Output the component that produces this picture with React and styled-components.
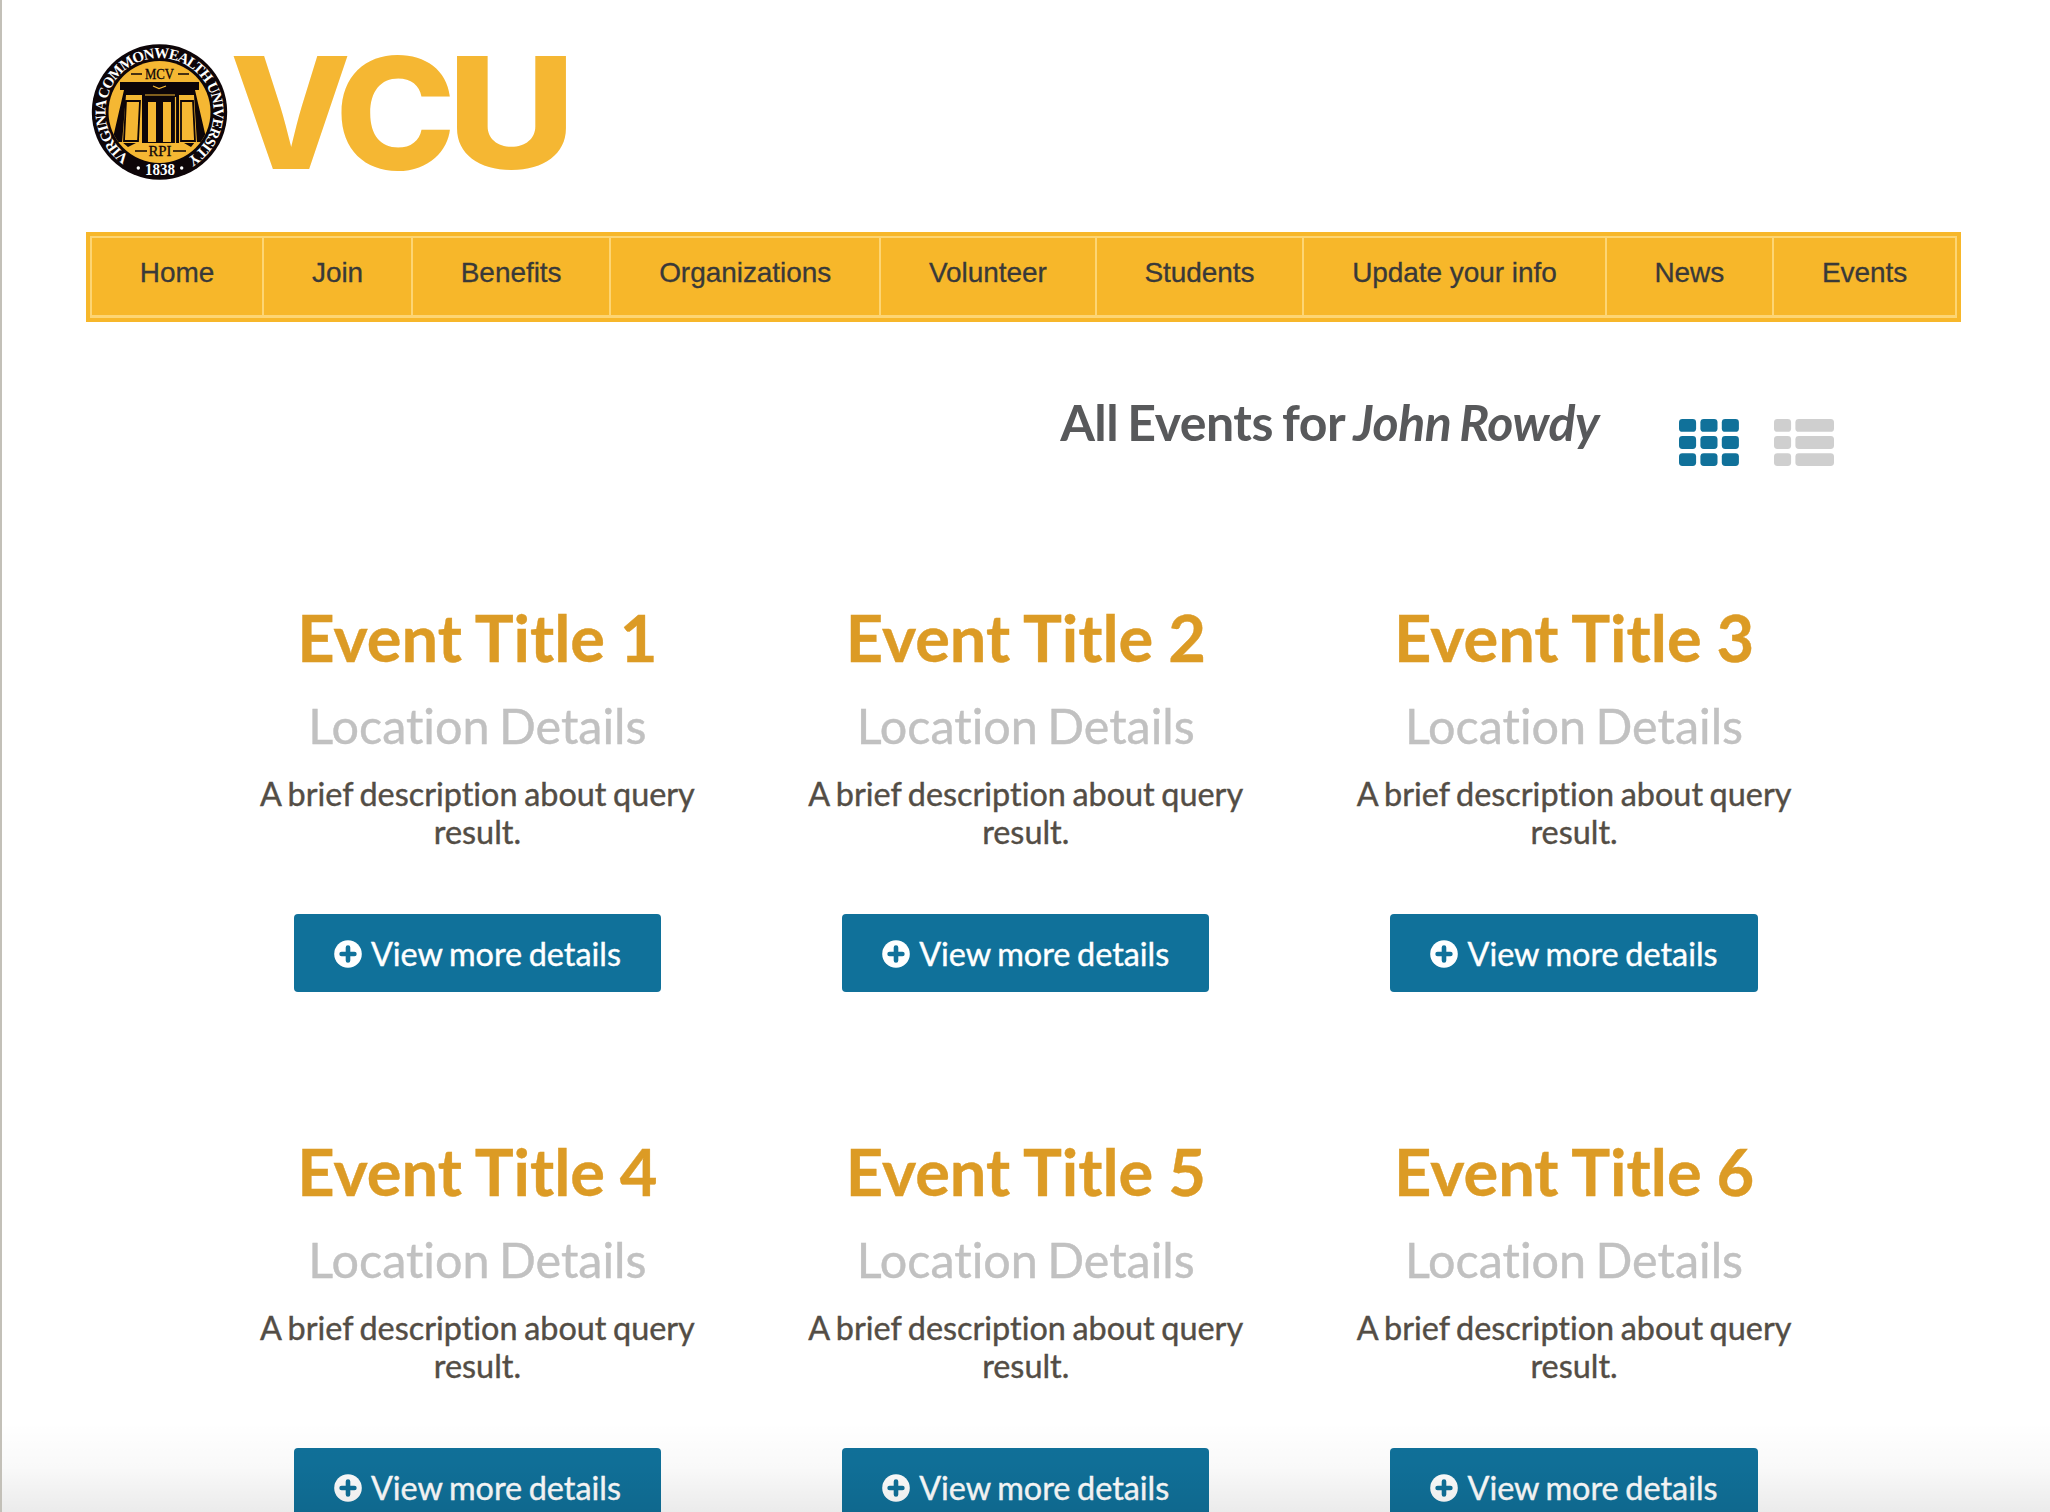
import React from "react";
import styled, { createGlobalStyle } from "styled-components";

const Global = createGlobalStyle`
  *{box-sizing:border-box}
  html,body{margin:0;padding:0;background:#fff}
  body{overflow:hidden}
`;
const Page = styled.div`
  position: relative;
  height: 1512px;
  overflow: hidden;
  background: #fff;
  border-left: 2px solid #c3c0b8;
  font-family: Lato, "Open Sans", sans-serif;
  font-variant-ligatures: none;
  &::after {
    content: "";
    position: absolute;
    inset: auto 0 0 0;
    height: 90px;
    background: linear-gradient(rgba(0,0,0,0), rgba(0,0,0,0.025) 50%, rgba(0,0,0,0.08));
  }
`;
const Header = styled.header`
  display: flex;
  height: 232px;
  padding-left: 86px;
`;
const Logo = styled.svg`
  display: block;
  width: 500px;
  height: 230px;
`;
const Nav = styled.nav`
  width: 1875px;
  height: 90px;
  margin-left: 84px;
  padding: 4px;
  background: #f7b72a;
`;
const Menu = styled.ul`
  display: flex;
  height: 82px;
  margin: 0;
  padding: 0;
  list-style: none;
  border: 2px solid #fdd573;
  border-bottom-width: 3px;
`;
const MenuItem = styled.li`
  flex: 1 1 auto;
  padding: 17px 47px 0;
  text-align: center;
  font: 28px/36px "Liberation Sans", Arial, sans-serif;
  letter-spacing: -0.05px;
  color: #393939;
  -webkit-text-stroke: 0.3px #393939;
  white-space: nowrap;
  & + & { border-left: 2px solid #fdd573; }
`;
const TitleBar = styled.div`
  display: flex;
  justify-content: flex-end;
  height: 226px;
  padding: 66px 216px 0 0;
`;
const Heading = styled.h2`
  margin: 0 80px 0 0;
  font-size: 50px;
  line-height: 68px;
  font-weight: 700;
  letter-spacing: -0.5px;
  word-spacing: -2.5px;
  color: #58595b;
  white-space: nowrap;
`;
const ViewSwitch = styled.div`
  display: flex;
  gap: 35px;
  padding-top: 31px;
`;
const ViewIcon = styled.svg`
  display: block;
  width: 60px;
  height: 47px;
  fill: ${(p) => (p.$active ? "#10719a" : "#cfcfcf")};
`;
const Grid = styled.main`
  display: grid;
  grid-template-columns: repeat(3, 548.3px);
  grid-auto-rows: 534px;
  margin-left: 201.3px;
`;
const Card = styled.article`
  display: flex;
  flex-direction: column;
  align-items: center;
  padding-top: 49px;
  text-align: center;
`;
const Title = styled.h1`
  margin: 0;
  font-size: 65px;
  line-height: 80px;
  font-weight: 700;
  word-spacing: -1px;
  color: #dc9b25;
  -webkit-text-stroke: 0.4px #dc9b25;
`;
const Place = styled.h3`
  margin: 16px 0 0;
  font-size: 48.5px;
  line-height: 64px;
  font-weight: 400;
  word-spacing: -3px;
  color: #c1c1c1;
  -webkit-text-stroke: 0.4px #c1c1c1;
`;
const Blurb = styled.p`
  width: 450px;
  margin: 18px 0 0;
  font-size: 32.4px;
  line-height: 38px;
  word-spacing: -1.7px;
  color: #534d45;
  -webkit-text-stroke: 0.4px #534d45;
`;
const Button = styled.button`
  display: flex;
  align-items: center;
  justify-content: center;
  gap: 9px;
  width: 367.5px;
  height: 78px;
  margin: 63px 0 0;
  padding: 2px 0 0;
  border: 0;
  border-radius: 4px;
  background: #10719a;
  color: #fff;
  font: 400 32.4px/38px Lato, sans-serif;
  word-spacing: -1.7px;
  -webkit-text-stroke: 0.4px #fff;
`;
const PlusIcon = styled.svg`
  display: block;
  width: 28px;
  height: 28px;
`;

const items = ["Home", "Join", "Benefits", "Organizations", "Volunteer", "Students", "Update your info", "News", "Events"];

function Seal() {
  return (
    <g>
      <circle cx="71.5" cy="72" r="67.7" fill="#0d0508" />
      <circle cx="71.5" cy="72" r="51" fill="#f5b733" />
      <defs>
        <clipPath id="disc"><circle cx="71.5" cy="72" r="51" /></clipPath>
        <path id="ring" d="M41.3 116.8 A54 54 0 1 1 101.7 116.8" />
      </defs>
      <g clipPath="url(#disc)" fill="#0d0508">
        <path d="M32 42H111V50H107L119 102H107L103 107H40L34 102H24L36 50H32Z" />
        <path d="M38 55H54V103H34Z" fill="#f5b733" />
        <path d="M91 55H106L109 103H91Z" fill="#f5b733" />
        <path d="M38 61H52L50 101H36ZM93 61H105L107 101H93Z" fill="none" stroke="#0d0508" strokeWidth="1.8" />
        <path d="M60 57H68V102H60ZM75 57H83V102H75ZM40 107L48 103H96L103 107Z" fill="#f5b733" />
        <path d="M59 57H69V62H59ZM74 57H84V62H74Z" fill="#0d0508" />
        <path d="M57 55H87M87.5 57V103M38 56H53M92 56H106M65 46L71 48.5L78 46" stroke="#f5b733" strokeWidth="1.2" fill="none" />
        <path d="M43 34H54M90 34H101M47 111H59M85 111H98" stroke="#0d0508" strokeWidth="1.3" />
      </g>
      <g fontFamily="Liberation Serif, serif" textAnchor="middle" fill="#0d0508">
        <text x="71.5" y="39" fontSize="15" textLength="29" lengthAdjust="spacingAndGlyphs" stroke="#0d0508" strokeWidth="0.3">MCV</text>
        <text x="72" y="116" fontSize="15" textLength="23" lengthAdjust="spacingAndGlyphs" stroke="#0d0508" strokeWidth="0.3">RPI</text>
        <text x="72" y="135.3" fontSize="17" fontWeight="700" fill="#fff" textLength="30" lengthAdjust="spacingAndGlyphs">1838</text>
      </g>
      <circle cx="50.3" cy="128" r="1.7" fill="#fff" />
      <circle cx="93.7" cy="128" r="1.7" fill="#fff" />
      <text fontFamily="Liberation Serif, serif" fontSize="15" fontWeight="700" fill="#fff">
        <textPath href="#ring" textLength="278" lengthAdjust="spacing">VIRGINIA COMMONWEALTH UNIVERSITY</textPath>
      </text>
    </g>
  );
}

function BrandLogo() {
  return (
    <Logo viewBox="0 -40 500 230">
      <Seal />
      <g fill="#f5b733" fontFamily="Inter, Liberation Sans, sans-serif" fontWeight="800" fontSize="155">
        <text x="142" y="128.5" textLength="121" lengthAdjust="spacingAndGlyphs">V</text>
        <text x="247" y="128.5" textLength="121" lengthAdjust="spacingAndGlyphs">C</text>
        <text x="359" y="128.5" textLength="129" lengthAdjust="spacingAndGlyphs">U</text>
      </g>
    </Logo>
  );
}

const rows = [0, 17.1, 34.2];

export default function App() {
  return (
    <Page>
      <Global />
      <Header><BrandLogo /></Header>
      <Nav>
        <Menu>{items.map((t) => <MenuItem key={t}>{t}</MenuItem>)}</Menu>
      </Nav>
      <TitleBar>
        <Heading>All Events for <em>John Rowdy</em></Heading>
        <ViewSwitch>
          <ViewIcon $active viewBox="0 0 60 47">
            {rows.map((y) => [0, 21.4, 42.8].map((x) => <rect key={x + "-" + y} x={x} y={y} width="17.1" height="12.8" rx="3.4" />))}
          </ViewIcon>
          <ViewIcon viewBox="0 0 60 47">
            {rows.map((y) => (
              <g key={y}>
                <rect y={y} width="17.1" height="12.8" rx="3.4" />
                <rect x="21.4" y={y} width="38.6" height="12.8" rx="3.4" />
              </g>
            ))}
          </ViewIcon>
        </ViewSwitch>
      </TitleBar>
      <Grid>
        {[1, 2, 3, 4, 5, 6].map((n) => (
          <Card key={n}>
            <Title>Event Title {n}</Title>
            <Place>Location Details</Place>
            <Blurb>A brief description about query result.</Blurb>
            <Button>
              <PlusIcon viewBox="0 0 28 28">
                <circle cx="14" cy="14" r="13.8" fill="#fff" />
                <path d="M14 7.6V20.4M7.6 14H20.4" stroke="#10719a" strokeWidth="4.6" strokeLinecap="round" />
              </PlusIcon>
              View more details
            </Button>
          </Card>
        ))}
      </Grid>
    </Page>
  );
}
